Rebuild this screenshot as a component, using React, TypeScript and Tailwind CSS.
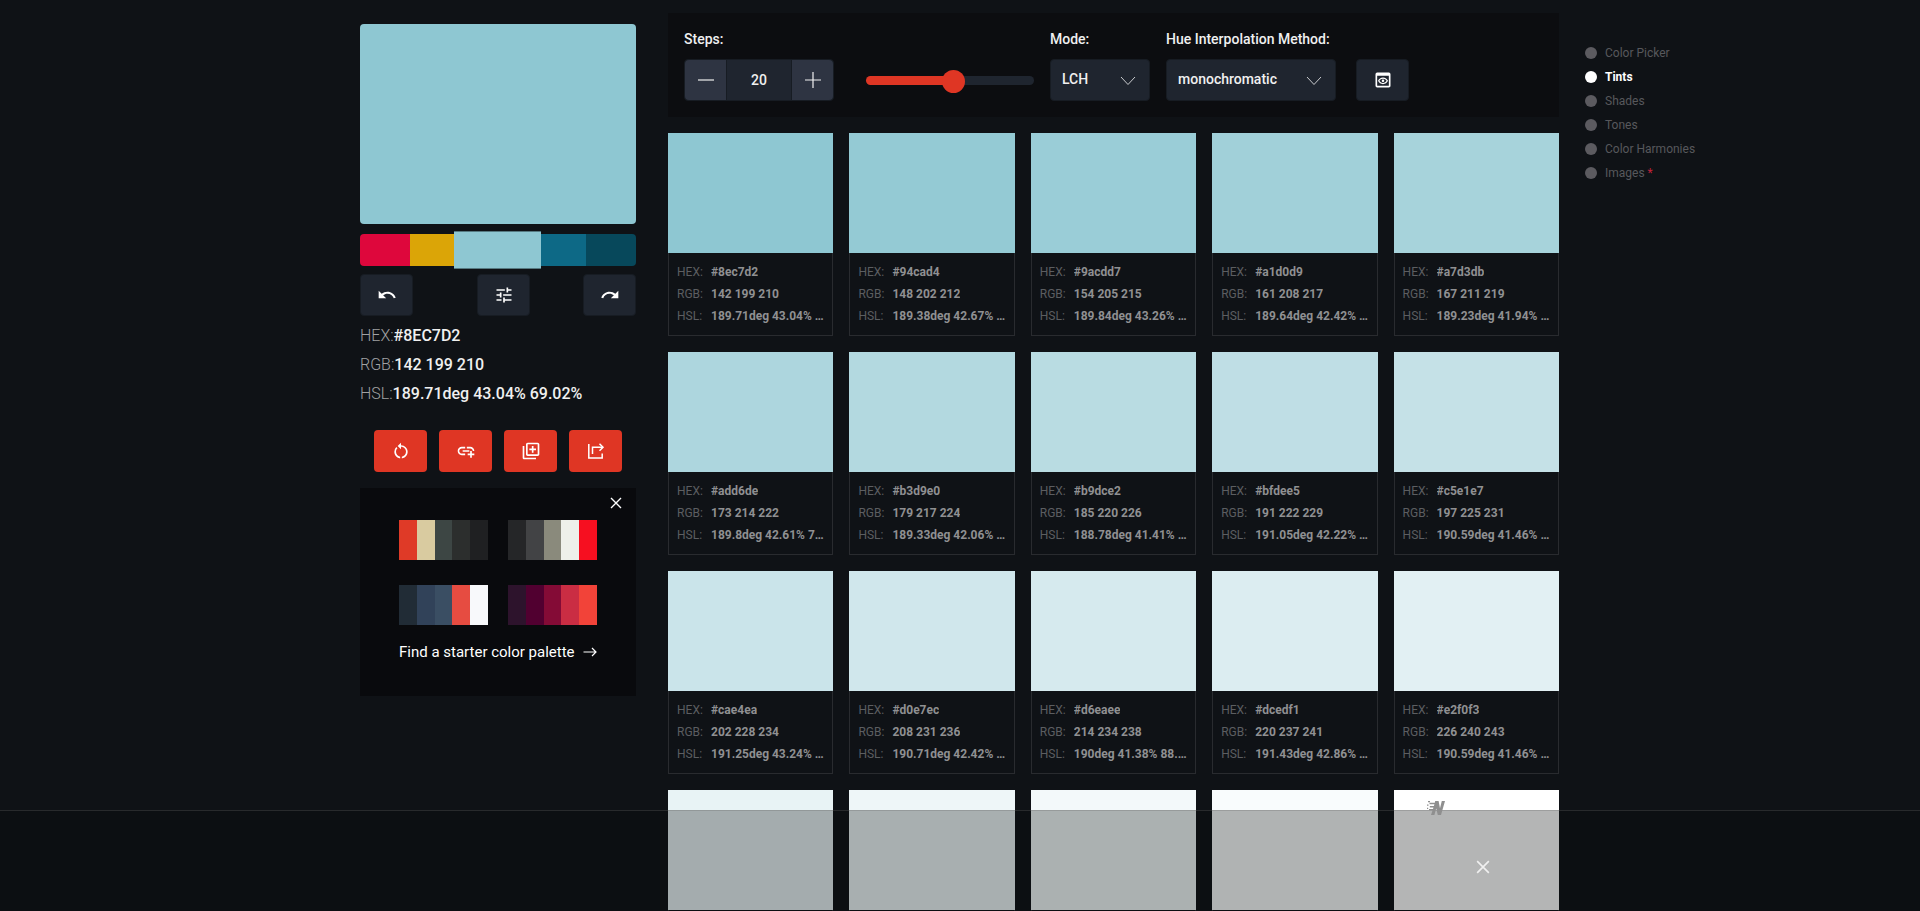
import React from "react";
import { MdUndo, MdRedo, MdTune, MdRestartAlt, MdAddLink, MdOutlineLibraryAdd, MdOutlinePreview } from "react-icons/md";

const palette: { name: string; className: string }[] = [
  { name: "#DE073C", className: "w-[50px] h-8 bg-[#de073c] rounded-l-sm" },
  { name: "#DBA507", className: "w-11 h-8 bg-[#dba507]" },
  { name: "#8EC7D2", className: "flex-1 h-[38px] bg-[#8ec7d2] border-y border-[#567a82]" },
  { name: "#0D6986", className: "w-[45px] h-8 bg-[#0d6986]" },
  { name: "#07485B", className: "w-[50px] h-8 bg-[#07485b] rounded-r-sm" },
];

const starters: string[][] = [
  ["#df3a27", "#d9cba0", "#3d4644", "#2c2e2d", "#1f2022"],
  ["#252628", "#424345", "#8a8a7c", "#eef0ea", "#f60f20"],
  ["#212c36", "#314259", "#3a4e63", "#e64c41", "#f8f9fb"],
  ["#2d132c", "#510030", "#840b36", "#ca2d43", "#f24339"],
];

type Tint = { hex: string; rgb: string; hsl: string };

const tints: Tint[] = [
  { hex: "#8ec7d2", rgb: "142 199 210", hsl: "189.71deg 43.04% 69.02%" },
  { hex: "#94cad4", rgb: "148 202 212", hsl: "189.38deg 42.67% 70.59%" },
  { hex: "#9acdd7", rgb: "154 205 215", hsl: "189.84deg 43.26% 72.35%" },
  { hex: "#a1d0d9", rgb: "161 208 217", hsl: "189.64deg 42.42% 74.12%" },
  { hex: "#a7d3db", rgb: "167 211 219", hsl: "189.23deg 41.94% 75.69%" },
  { hex: "#add6de", rgb: "173 214 222", hsl: "189.8deg 42.61% 77.45%" },
  { hex: "#b3d9e0", rgb: "179 217 224", hsl: "189.33deg 42.06% 79.02%" },
  { hex: "#b9dce2", rgb: "185 220 226", hsl: "188.78deg 41.41% 80.59%" },
  { hex: "#bfdee5", rgb: "191 222 229", hsl: "191.05deg 42.22% 82.35%" },
  { hex: "#c5e1e7", rgb: "197 225 231", hsl: "190.59deg 41.46% 83.92%" },
  { hex: "#cae4ea", rgb: "202 228 234", hsl: "191.25deg 43.24% 85.49%" },
  { hex: "#d0e7ec", rgb: "208 231 236", hsl: "190.71deg 42.42% 87.06%" },
  { hex: "#d6eaee", rgb: "214 234 238", hsl: "190deg 41.38% 88.63%" },
  { hex: "#dcedf1", rgb: "220 237 241", hsl: "191.43deg 42.86% 90.39%" },
  { hex: "#e2f0f3", rgb: "226 240 243", hsl: "190.59deg 41.46% 91.96%" },
  { hex: "#e8f3f5", rgb: "232 243 245", hsl: "189.23deg 39.39% 93.53%" },
  { hex: "#eef6f8", rgb: "238 246 248", hsl: "192deg 41.67% 95.29%" },
  { hex: "#f3f9fa", rgb: "243 249 250", hsl: "188.57deg 41.18% 96.67%" },
  { hex: "#f9fcfd", rgb: "249 252 253", hsl: "195deg 50% 98.43%" },
  { hex: "#ffffff", rgb: "255 255 255", hsl: "0deg 0% 100%" },
];

const sections = ["Color Picker", "Tints", "Shades", "Tones", "Color Harmonies", "Images"];

const darkButton = "flex h-[42px] w-[53px] items-center justify-center rounded-sm border border-[#171c23] bg-[#1f252f] text-white";
const redButton = "flex h-[42px] w-[53px] items-center justify-center rounded bg-[#df3624] text-white";

function ShareIcon() {
  return (
    <svg viewBox="0 0 18 18" className="size-[18px]" fill="none" stroke="currentColor" strokeWidth="1.5" aria-hidden="true">
      <path d="M1.8 2v14h13.4v-4.5" />
      <path d="M5.5 12V5.3h10" />
      <path d="M12.5 1.8 16 5.3l-3.5 3.5" />
    </svg>
  );
}

function Cross({ className }: { className: string }) {
  return (
    <svg viewBox="0 0 12 12" className={className} fill="none" stroke="currentColor" strokeWidth="1.4" aria-hidden="true">
      <path d="M1 1l10 10M11 1L1 11" />
    </svg>
  );
}

function Chevron() {
  return (
    <svg viewBox="0 0 16 10" className="pointer-events-none absolute right-[14px] top-[17px] h-[10px] w-4" fill="none" stroke="#c8cacd" strokeWidth="1" aria-hidden="true">
      <path d="M1 1l7 7.5L15 1" />
    </svg>
  );
}

function Sidebar() {
  return (
    <aside className="w-[276px] shrink-0 pt-6">
      <div className="h-[200px] rounded bg-[#8ec7d2]" />
      <div className="mt-[7px] flex items-center">
        {palette.map((c) => (
          <button key={c.name} aria-label={c.name} className={c.className} />
        ))}
      </div>
      <div className="mt-[5px] flex justify-between">
        <div className="flex gap-16">
          <button aria-label="Undo" className={darkButton}><MdUndo size={20} /></button>
          <button aria-label="Adjust" className={darkButton}><MdTune size={20} /></button>
        </div>
        <button aria-label="Redo" className={darkButton}><MdRedo size={20} /></button>
      </div>
      <dl className="mt-[5px] text-base leading-[29px]">
        {[["HEX:", "#8EC7D2"], ["RGB:", "142 199 210"], ["HSL:", "189.71deg 43.04% 69.02%"]].map(([k, v]) => (
          <div key={k} className="flex">
            <dt className="font-light text-[#a0a1a3]">{k}</dt>
            <dd className="font-medium text-[#f0f0f0]">{v}</dd>
          </div>
        ))}
      </dl>
      <div className="mt-[22px] flex justify-center gap-3">
        <button aria-label="Reset" className={redButton}><MdRestartAlt size={20} /></button>
        <button aria-label="Copy link" className={redButton}><MdAddLink size={20} /></button>
        <button aria-label="Add to library" className={redButton}><MdOutlineLibraryAdd size={20} /></button>
        <button aria-label="Share" className={redButton}><ShareIcon /></button>
      </div>
      <section className="mt-4 h-52 bg-[#090a0d] px-[39px]">
        <div className="-mr-[25px] flex h-8 items-start justify-end pt-[9px]">
          <button aria-label="Close" className="text-white"><Cross className="size-3" /></button>
        </div>
        <div className="grid grid-cols-2 gap-x-5 gap-y-[25px]">
          {starters.map((row) => (
            <button key={row[0]} aria-label="Starter palette" className="flex h-10">
              {row.map((c) => (
                <span key={c} className="h-full flex-1" style={{ backgroundColor: c }} />
              ))}
            </button>
          ))}
        </div>
        <a href="#palettes" className="mt-4 flex items-center justify-between whitespace-nowrap text-[15px] leading-[22px] text-white">
          Find a starter color palette
          <svg viewBox="0 0 14 10" className="h-[10px] w-3.5" fill="none" stroke="currentColor" strokeWidth="1.2" aria-hidden="true">
            <path d="M0.5 5H13M9 1l4 4-4 4" />
          </svg>
        </a>
      </section>
    </aside>
  );
}

function Controls() {
  return (
    <form className="flex h-[104px] items-start bg-[#0c0d10] px-4 pt-4 text-sm font-medium text-[#f0f0f0]">
      <div>
        <label htmlFor="steps" className="block leading-5">Steps:</label>
        <div className="mt-[10px] flex h-[42px] w-[150px] gap-px rounded-sm border border-[#171c23] bg-[#171c23]">
          <button type="button" aria-label="Decrease" className="flex w-[41px] items-center justify-center rounded-l-sm bg-[#2e3442]">
            <svg viewBox="0 0 16 16" className="size-4" stroke="currentColor" strokeWidth="1.2" aria-hidden="true"><path d="M0 8h16" /></svg>
          </button>
          <input id="steps" defaultValue="20" className="min-w-0 flex-1 bg-[#1f252f] text-center outline-none" />
          <button type="button" aria-label="Increase" className="flex w-[41px] items-center justify-center rounded-r-sm bg-[#2e3442]">
            <svg viewBox="0 0 16 16" className="size-4" stroke="currentColor" strokeWidth="1.2" aria-hidden="true"><path d="M0 8h16M8 0v16" /></svg>
          </button>
        </div>
      </div>
      <input
        type="range"
        aria-label="Steps"
        min={0}
        max={38}
        defaultValue={20}
        className="ml-8 mt-[39px] h-6 w-[168px] appearance-none bg-transparent [&::-webkit-slider-runnable-track]:h-[9px] [&::-webkit-slider-runnable-track]:rounded-full [&::-webkit-slider-runnable-track]:bg-[linear-gradient(to_right,#df3624_52%,#1f252f_52%)] [&::-webkit-slider-thumb]:-mt-[6px] [&::-webkit-slider-thumb]:size-[23px] [&::-webkit-slider-thumb]:appearance-none [&::-webkit-slider-thumb]:rounded-full [&::-webkit-slider-thumb]:bg-[#df3624]"
      />
      <div className="ml-4">
        <label htmlFor="mode" className="block leading-5">Mode:</label>
        <div className="relative mt-[10px]">
          <select id="mode" className="h-[42px] w-[100px] appearance-none rounded-sm border border-[#171c23] bg-[#1f252f] pb-0.5 pl-[11px] outline-none">
            <option>LCH</option>
          </select>
          <Chevron />
        </div>
      </div>
      <div className="ml-4">
        <label htmlFor="method" className="block leading-5">Hue Interpolation Method:</label>
        <div className="relative mt-[10px] w-[170px]">
          <select id="method" className="h-[42px] w-[170px] appearance-none rounded-sm border border-[#171c23] bg-[#1f252f] pb-0.5 pl-[11px] outline-none">
            <option>monochromatic</option>
          </select>
          <Chevron />
        </div>
      </div>
      <button type="button" aria-label="Preview" className={`${darkButton} ml-5 mt-[30px]`}>
        <MdOutlinePreview size={20} />
      </button>
    </form>
  );
}

function TintCard({ tint }: { tint: Tint }) {
  return (
    <article className="min-w-0">
      <div className="h-[120px]" style={{ backgroundColor: tint.hex }} />
      <dl className="h-[83px] border border-t-0 border-[#292b2f] pl-2 pr-1 pt-2 text-xs leading-[22px]">
        {[["HEX:", tint.hex], ["RGB:", tint.rgb], ["HSL:", tint.hsl]].map(([k, v]) => (
          <div key={k} className="flex">
            <dt className="w-[34px] shrink-0 text-[#5c5e61]">{k}</dt>
            <dd className="truncate font-bold text-[#8f9092]">{v}</dd>
          </div>
        ))}
      </dl>
    </article>
  );
}

function SectionNav() {
  return (
    <nav className="w-[150px] shrink-0 pt-[41px]">
      <ul>
        {sections.map((s) => (
          <li key={s}>
            <a href={`#${s}`} className={s === "Tints" ? "flex h-6 items-center gap-2 text-xs font-bold text-white" : "flex h-6 items-center gap-2 text-xs text-[#57585c]"}>
              <span className={s === "Tints" ? "size-3 rounded-full bg-white" : "size-3 rounded-full bg-[#5c5b60]"} />
              <span>
                {s}
                {s === "Images" && <span className="text-[#c0223a]"> *</span>}
              </span>
            </a>
          </li>
        ))}
      </ul>
    </nav>
  );
}

export default function App() {
  return (
    <div className="relative h-screen overflow-hidden bg-[#0f1216] font-['Roboto',sans-serif]">
      <div className="h-full overflow-y-auto pl-[360px] pr-[185px] [scrollbar-width:none]">
        <div className="flex">
          <Sidebar />
          <main className="ml-8 mr-[26px] min-w-0 flex-1 pt-[13px]">
            <Controls />
            <div className="mt-4 grid grid-cols-5 gap-4">
              {tints.map((t) => (
                <TintCard key={t.hex} tint={t} />
              ))}
            </div>
          </main>
          <SectionNav />
        </div>
      </div>
      <footer className="absolute inset-x-0 bottom-0 h-[101px] border-t border-[#6b6b6b]/30 bg-[#080b0a]/30">
        <svg viewBox="0 0 18 14" className="absolute -top-[10px] left-[1427px] h-3.5 w-[18px] text-[#8f8f8f]" fill="currentColor" aria-hidden="true">
          <path d="M8.200 0h3.400l1.400 7.200L14.800 0H18l-4 14h-3.200L9.200 7.500 7.400 14H4l1.600-4.800H2V8h4l.4-1.600H2.800V5h4.100l.5-1.800H2.500V1.800h5.300zM1 0h2v1.200H1zM0 3.400h1.500v1.400H0zM0 6.800h1.200V8H0z" />
        </svg>
        <button aria-label="Close banner" className="absolute left-[1476px] top-[49px] text-[#f0f0f0]">
          <Cross className="size-3.5" />
        </button>
      </footer>
    </div>
  );
}
